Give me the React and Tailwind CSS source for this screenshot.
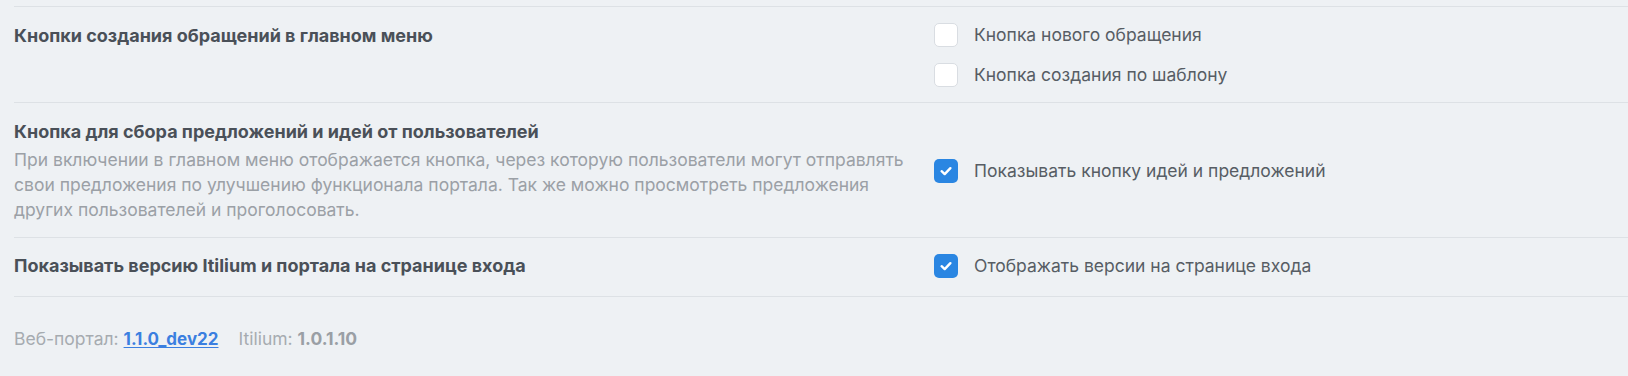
import React from "react";

function Box({ checked }) {
  if (checked) {
    return (
      <span className="flex h-6 w-6 shrink-0 items-center justify-center rounded-[5px] bg-[#2a86e2]">
        <svg width="16" height="16" viewBox="0 0 16 16" fill="none">
          <path d="M3.6 8.2 L6.7 11.1 L12.4 5.2" stroke="white" strokeWidth="2.4" strokeLinecap="round" strokeLinejoin="round" />
        </svg>
      </span>
    );
  }
  return <span className="h-6 w-6 shrink-0 rounded-[5px] border border-[#d9dde2] bg-white" />;
}

function Check({ checked, label }) {
  return (
    <label className="flex items-center gap-4">
      <Box checked={checked} />
      <span className="text-[17.5px] leading-6 text-[#575d64]">{label}</span>
    </label>
  );
}

export default function App() {
  return (
    <div
      className="h-[376px] w-full bg-[#eef1f4] pl-[14px] pt-[6px]"
      style={{ fontFamily: "Inter, 'Noto Sans', sans-serif" }}
    >
      <div className="flex items-start border-t border-[#dde1e5] pt-4 pb-[15px]">
        <div className="w-[920px] shrink-0 pr-4 text-[18px] font-bold leading-[26px] text-[#4a5058]">
          Кнопки создания обращений в главном меню
        </div>
        <div className="flex flex-col gap-4">
          <Check label="Кнопка нового обращения" />
          <Check label="Кнопка создания по шаблону" />
        </div>
      </div>

      <div className="flex items-center border-t border-[#dde1e5] pt-[17px] pb-[15px]">
        <div className="w-[920px] shrink-0 pr-[14px]">
          <div className="text-[18px] font-bold leading-6 text-[#4a5058]">
            Кнопка для сбора предложений и идей от пользователей
          </div>
          <p className="mt-[3px] text-[17.5px] leading-[25px] text-[#9ba0a6]">
            При включении в главном меню отображается кнопка, через которую пользователи могут отправлять свои предложения по улучшению функционала портала. Так же можно просмотреть предложения других пользователей и проголосовать.
          </p>
        </div>
        <Check checked label="Показывать кнопку идей и предложений" />
      </div>

      <div className="flex items-center border-t border-[#dde1e5] pt-4 pb-[18px]">
        <div className="w-[920px] shrink-0 pr-4 text-[18px] font-bold leading-6 text-[#4a5058]">
          Показывать версию Itilium и портала на странице входа
        </div>
        <Check checked label="Отображать версии на странице входа" />
      </div>

      <div className="border-t border-[#dde1e5] pt-8 text-[17.5px] leading-5 text-[#a6abb0]">
        Веб-портал:{" "}
        <a href="#" className="text-[17px] font-bold text-[#3b7fe0] underline underline-offset-2">
          1.1.0_dev22
        </a>
        <span className="ml-5">Itilium: </span>
        <span className="font-bold text-[#9a9fa5]">1.0.1.10</span>
      </div>
    </div>
  );
}
